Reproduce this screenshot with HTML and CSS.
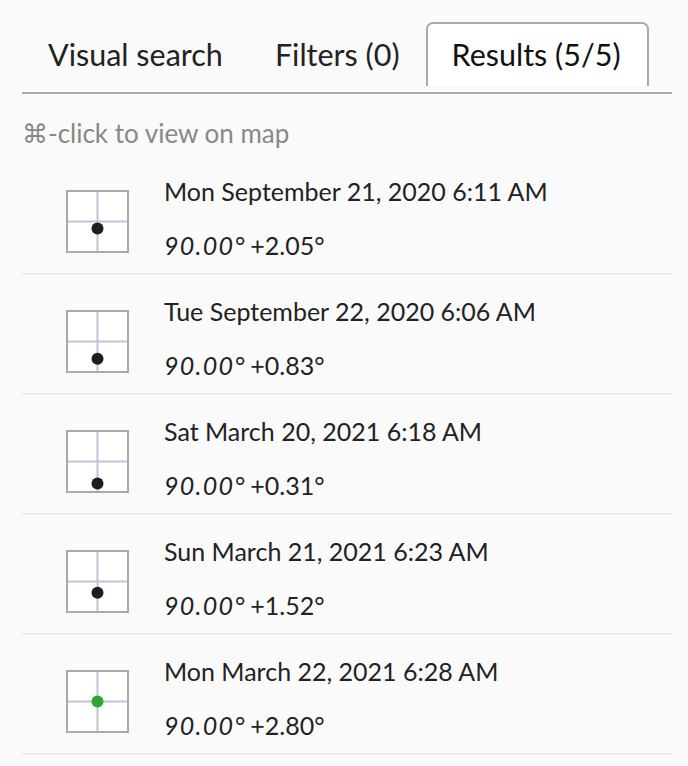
FILE: index.html
```html
<!DOCTYPE html>
<html lang="en">
<head>
<meta charset="utf-8">
<title>Results</title>
<link rel="stylesheet" href="styles.css">
</head>
<body>
<div class="panel">
  <nav class="tabs">
    <div class="tab">Visual search</div>
    <div class="tab">Filters (0)</div>
    <div class="tab active">Results (5/5)</div>
  </nav>
  <p class="hint">⌘-click to view on map</p>
  <ul class="results">
    <li class="row">
      <svg class="chart" width="63" height="63" viewBox="0 0 63 63"><rect class="frame" x="1" y="1" width="61" height="61"/><line class="grid" x1="31.5" y1="2" x2="31.5" y2="61"/><line class="grid" x1="2" y1="31.5" x2="61" y2="31.5"/><circle class="dot" cx="31.5" cy="38.6" r="6"/></svg>
      <div class="info"><div class="date">Mon September 21, 2020 6:11 AM</div><div class="pos"><em>90.00°</em> +2.05°</div></div>
    </li>
    <li class="row">
      <svg class="chart" width="63" height="63" viewBox="0 0 63 63"><rect class="frame" x="1" y="1" width="61" height="61"/><line class="grid" x1="31.5" y1="2" x2="31.5" y2="61"/><line class="grid" x1="2" y1="31.5" x2="61" y2="31.5"/><circle class="dot" cx="31.5" cy="48.8" r="6"/></svg>
      <div class="info"><div class="date">Tue September 22, 2020 6:06 AM</div><div class="pos"><em>90.00°</em> +0.83°</div></div>
    </li>
    <li class="row">
      <svg class="chart" width="63" height="63" viewBox="0 0 63 63"><rect class="frame" x="1" y="1" width="61" height="61"/><line class="grid" x1="31.5" y1="2" x2="31.5" y2="61"/><line class="grid" x1="2" y1="31.5" x2="61" y2="31.5"/><circle class="dot" cx="31.5" cy="53.4" r="6"/></svg>
      <div class="info"><div class="date">Sat March 20, 2021 6:18 AM</div><div class="pos"><em>90.00°</em> +0.31°</div></div>
    </li>
    <li class="row">
      <svg class="chart" width="63" height="63" viewBox="0 0 63 63"><rect class="frame" x="1" y="1" width="61" height="61"/><line class="grid" x1="31.5" y1="2" x2="31.5" y2="61"/><line class="grid" x1="2" y1="31.5" x2="61" y2="31.5"/><circle class="dot" cx="31.5" cy="42.8" r="6"/></svg>
      <div class="info"><div class="date">Sun March 21, 2021 6:23 AM</div><div class="pos"><em>90.00°</em> +1.52°</div></div>
    </li>
    <li class="row">
      <svg class="chart" width="63" height="63" viewBox="0 0 63 63"><rect class="frame" x="1" y="1" width="61" height="61"/><line class="grid" x1="31.5" y1="2" x2="31.5" y2="61"/><line class="grid" x1="2" y1="31.5" x2="61" y2="31.5"/><circle class="dot current" cx="31.5" cy="31.5" r="6"/></svg>
      <div class="info"><div class="date">Mon March 22, 2021 6:28 AM</div><div class="pos"><em>90.00°</em> +2.80°</div></div>
    </li>
  </ul>
</div>
</body>
</html>
```

FILE: styles.css
```css
html, body {
  margin: 0;
  padding: 0;
  background: #fafafa;
}

body {
  font-family: Lato, "DejaVu Sans", sans-serif;
  color: #222;
}

.panel {
  width: 650px;
  margin-left: 22px;
  padding-top: 22px;
}

.tabs {
  display: flex;
  border-bottom: 2px solid #aaa;
}

.tab {
  height: 62px;
  line-height: 60px;
  padding: 0 24px;
  font-size: 30.5px;
  border: 2px solid transparent;
  border-bottom: none;
  border-radius: 7px 7px 0 0;
  margin-bottom: 6px;
}

.tab.active {
  background: #fff;
  border-color: #aaa;
  color: #111;
  padding-right: 26px;
}

.hint {
  margin: 24px 0 7px 0;
  font-size: 26px;
  line-height: 30px;
  color: #888;
}

.results {
  list-style: none;
  margin: 0;
  padding: 0;
}

.row {
  display: flex;
  align-items: flex-start;
  box-sizing: border-box;
  height: 120px;
  padding: 21px 0 0 44px;
  border-bottom: 2px solid #ebebeb;
}

.chart {
  display: block;
  flex: none;
  margin-top: 14px;
}

.frame {
  fill: #fff;
  stroke: #aaa;
  stroke-width: 2;
}

.grid {
  stroke: #c2c2d8;
  stroke-width: 2;
}

.dot {
  fill: #1e1e1e;
}

.dot.current {
  fill: #2ea52e;
}

.info {
  margin-left: 35px;
  font-size: 25px;
  line-height: 30px;
}

.pos {
  margin-top: 24px;
  word-spacing: -2px;
}

.pos em {
  font-style: italic;
  letter-spacing: 1.3px;
}
```
